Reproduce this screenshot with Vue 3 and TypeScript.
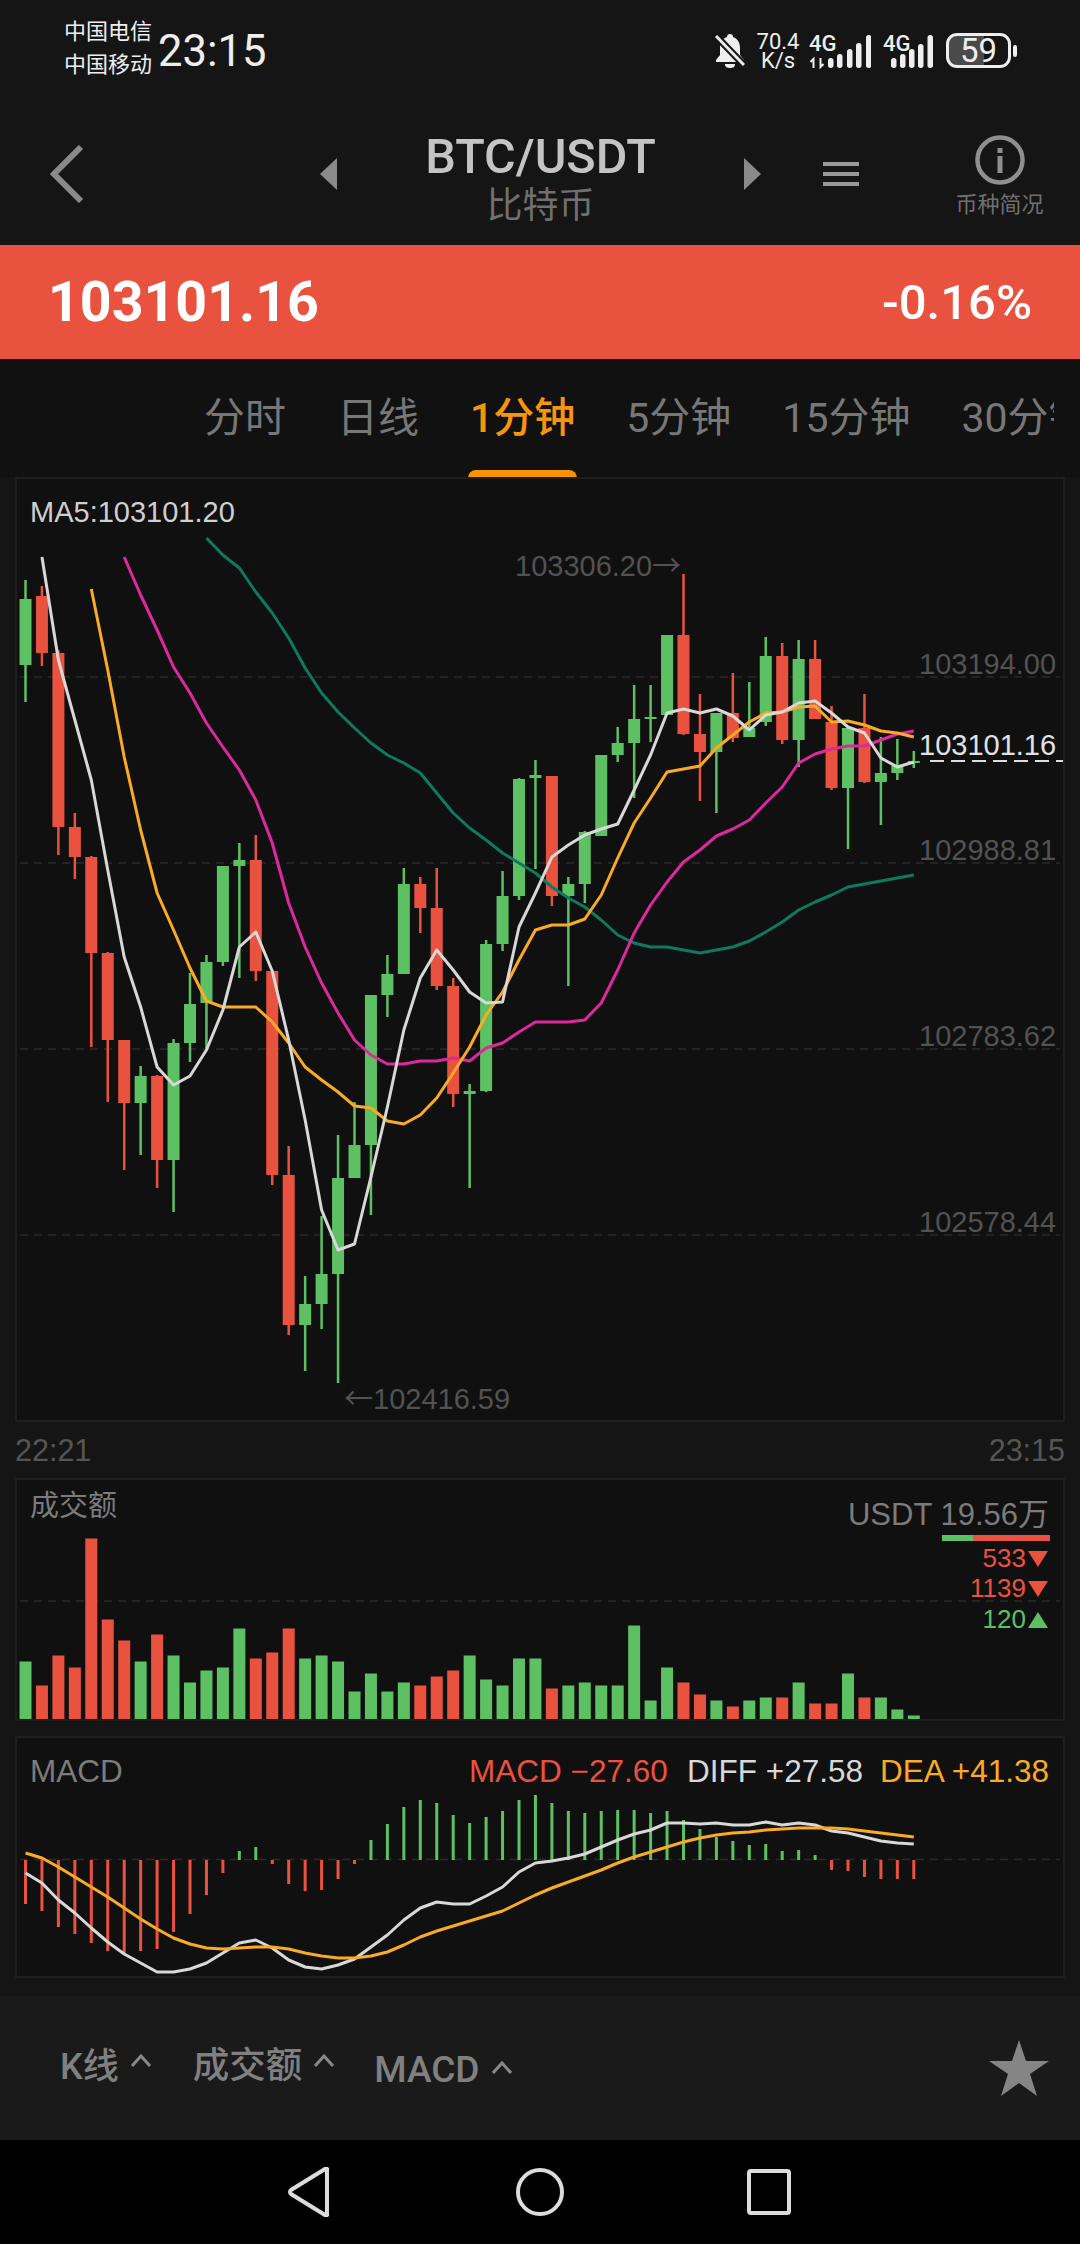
<template>
  <div class="page">
    <div class="status">
      <div class="carriers">
        <span>中国电信</span>
        <span>中国移动</span>
      </div>
      <span class="clock">23:15</span>
      <div class="status-right">
        <svg class="bell" width="30" height="35" viewBox="0 0 30 35">
          <path d="M15 1c-2 0-3 1-3 3C7 6 5 10 5 15v7l-4 5v2h28v-2l-4-5v-7c0-5-2-9-7-11 0-2-1-3-3-3z" fill="#eee" />
          <path d="M10 31h10c0 3-2 4-5 4s-5-1-5-4z" fill="#eee" />
          <path d="M1 3l28 29" stroke="#161718" stroke-width="7" />
          <path d="M1 3l28 29" stroke="#eee" stroke-width="3" />
        </svg>
        <div class="speed">
          <span>70.4</span>
          <span>K/s</span>
        </div>
        <svg class="sig" width="62" height="42" viewBox="809 26 62 42">
          <text x="809" y="50" class="net">4G</text>
          <path d="M813.5 67v-9l-3 3M820.5 57v9l3-3" stroke="#eee" stroke-width="2" fill="none" />
          <rect v-for="b in sig1" :key="b[0]" :x="b[0]" :y="b[1]" width="5.5" :height="67 - b[1]" rx="2.7" fill="#eee" />
        </svg>
        <svg class="sig sig2" width="50" height="42" viewBox="883 26 50 42">
          <text x="883" y="50" class="net">4G</text>
          <rect v-for="b in sig2" :key="b[0]" :x="b[0]" :y="b[1]" width="5.5" :height="67 - b[1]" rx="2.7" fill="#eee" />
        </svg>
        <div class="battery">59</div>
        <div class="battery-tip"></div>
      </div>
    </div>

    <div class="nav">
      <svg class="back" width="34" height="58" viewBox="0 0 34 58">
        <path d="M31 2L4 29l27 27" fill="none" stroke="#8a8a8a" stroke-width="6" />
      </svg>
      <svg class="tri-left" width="17" height="32" viewBox="0 0 17 32"><path d="M17 0v32L0 16z" fill="#8a8a8a" /></svg>
      <div class="title">
        <div class="pair">BTC/USDT</div>
        <div class="coin">比特币</div>
      </div>
      <svg width="17" height="32" viewBox="0 0 17 32"><path d="M0 0v32l17-16z" fill="#8a8a8a" /></svg>
      <div class="burger"><i></i><i></i><i></i></div>
      <div class="info">
        <svg width="50" height="50" viewBox="0 0 50 50">
          <circle cx="25" cy="25" r="22.5" fill="none" stroke="#8f8f8f" stroke-width="4.5" />
          <rect x="22.5" y="13" width="5" height="5" fill="#8f8f8f" />
          <rect x="22.5" y="21" width="5" height="17" fill="#8f8f8f" />
        </svg>
        <span>币种简况</span>
      </div>
    </div>

    <div class="price-bar">
      <span class="price">103101.16</span>
      <span class="change">-0.16%</span>
    </div>

    <div class="tabs">
      <div class="tabs-inner">
        <span v-for="t in tabs" :key="t" class="tab" :class="{ active: t === '1分钟' }">{{ t }}</span>
      </div>
    </div>

    <div class="panel main-panel">
      <svg class="chart" width="1050" height="945" viewBox="15 477 1050 945">
        <line x1="24" x2="1055" y1="478" y2="478" class="top-line" />
        <line v-for="y in gridY" :key="y" x1="20" x2="1060" :y1="y" :y2="y" class="grid" />
        <g v-for="(c, i) in candles" :key="i" :fill="c[0] ? green : red">
          <rect :x="xAt(i) - 1.25" :y="c[3]" width="2.5" :height="c[4] - c[3]" />
          <rect :x="xAt(i) - 6" :y="c[1]" width="12" :height="c[2] - c[1]" />
        </g>
        <polyline :points="line(ma30, 11)" class="ln" stroke="#0d7a5f" />
        <polyline :points="line(ma20, 6)" class="ln" stroke="#dc2a9e" />
        <polyline :points="line(ma10, 4)" class="ln" stroke="#f9ab25" />
        <polyline :points="line(ma5, 1)" class="ln" stroke="#d8d8d8" />
        <text x="30" y="522" class="lbl ma">MA5:103101.20</text>
        <text x="515" y="576" class="lbl dim">103306.20<tspan class="arrow">→</tspan></text>
        <text x="344" y="1409" class="lbl dim"><tspan class="arrow">←</tspan>102416.59</text>
        <text v-for="l in axis" :key="l[0]" x="919" :y="l[1]" class="lbl dim">{{ l[0] }}</text>
        <text x="919" y="755" class="lbl last">103101.16</text>
        <line x1="930" x2="1063" y1="761" y2="761" class="last-line" />
      </svg>
    </div>

    <div class="times">
      <span>22:21</span>
      <span>23:15</span>
    </div>

    <div class="panel vol-panel">
      <svg class="chart" width="1050" height="243" viewBox="15 1478 1050 243">
        <line x1="20" x2="1060" y1="1601" y2="1601" class="grid" />
        <rect
          v-for="(v, i) in volumes"
          :key="i"
          :x="xAt(i) - 6"
          :y="1719.5 - v[1]"
          width="12"
          :height="v[1]"
          :fill="v[0] ? green : red"
        />
        <text x="30" y="1516" class="lbl muted">成交额</text>
        <text x="1049" y="1525" class="lbl muted usdt" text-anchor="end">USDT 19.56万</text>
        <rect x="942" y="1535" width="31" height="6" :fill="green" />
        <rect x="973" y="1535" width="77" height="6" :fill="red" />
        <text x="1026" y="1567" class="lbl small" :fill="red" text-anchor="end">533</text>
        <path d="M1028 1551h20l-10 16z" :fill="red" />
        <text x="1026" y="1597" class="lbl small" :fill="red" text-anchor="end">1139</text>
        <path d="M1028 1581h20l-10 16z" :fill="red" />
        <text x="1026" y="1628" class="lbl small" :fill="green" text-anchor="end">120</text>
        <path d="M1028 1628h20l-10-16z" :fill="green" />
      </svg>
    </div>

    <div class="panel macd-panel">
      <svg class="chart" width="1050" height="242" viewBox="15 1736 1050 242">
        <line x1="20" x2="1060" y1="1859.5" y2="1859.5" class="grid" />
        <rect
          v-for="(h, i) in hist"
          :key="i"
          :x="xAt(i) - 1.5"
          :y="Math.min(h, 1860)"
          width="3"
          :height="Math.abs(h - 1860)"
          :fill="h < 1860 ? green : red"
        />
        <polyline :points="line(diff, 0)" class="ln" stroke="#d8d8d8" />
        <polyline :points="line(dea, 0)" class="ln" stroke="#f9ab25" />
        <text x="30" y="1782" class="lbl muted big">MACD</text>
        <text x="469" y="1782" class="lbl big" :fill="red">MACD −27.60</text>
        <text x="687" y="1782" class="lbl big" fill="#d8d8d8">DIFF +27.58</text>
        <text x="880" y="1782" class="lbl big" fill="#f9ab25">DEA +41.38</text>
      </svg>
    </div>

    <div class="toolbar">
      <div class="tool k"><span>K线</span><svg width="20" height="13" viewBox="0 0 20 13"><path d="M1 12l9-10 9 10" class="caret" /></svg></div>
      <div class="tool vol"><span>成交额</span><svg width="20" height="13" viewBox="0 0 20 13"><path d="M1 12l9-10 9 10" class="caret" /></svg></div>
      <div class="tool macd"><span>MACD</span><svg width="20" height="13" viewBox="0 0 20 13"><path d="M1 12l9-10 9 10" class="caret" /></svg></div>
      <svg class="star" width="60" height="56" viewBox="0 0 60 56">
        <path d="M30 0l7 21h23L41 34l7 22-18-13-18 13 7-22L0 21h23z" fill="#858585" />
      </svg>
    </div>

    <div class="sysnav">
      <svg width="42" height="50" viewBox="0 0 42 50">
        <path d="M39 3v44a1 1 0 0 1-2 1L3 27a2.5 2.5 0 0 1 0-4L37 2a1 1 0 0 1 2 1z" class="sys" />
      </svg>
      <svg width="50" height="50" viewBox="0 0 50 50"><circle cx="25" cy="25" r="22" class="sys" /></svg>
      <svg width="44" height="46" viewBox="0 0 44 46"><rect x="2" y="2" width="40" height="42" rx="2" class="sys" /></svg>
    </div>
  </div>
</template>

<script setup lang="ts">
const green = '#5dc063'
const red = '#ea5240'

const tabs = ['分时', '日线', '1分钟', '5分钟', '15分钟', '30分钟']
const gridY = [677, 863, 1049, 1235]
const axis: [string, number][] = [
  ['103194.00', 674],
  ['102988.81', 860],
  ['102783.62', 1046],
  ['102578.44', 1232]
]
const sig1 = [[828, 57], [837, 53], [847, 48], [856, 42], [866, 34]]
const sig2 = [[891, 57], [900, 53], [909, 48], [918, 43], [927.5, 34]]

const xAt = (i: number) => 25.5 + 16.45 * i
const line = (ys: number[], start: number) => ys.map((y, i) => `${xAt(i + start)},${y}`).join(' ')

// [green?, body top, body bottom, wick top, wick bottom]
const candles: number[][] = [
  [1, 599, 665, 580, 702], [0, 596, 653, 586, 666], [0, 653, 827, 650, 855], [0, 827, 857, 813, 879],
  [0, 857, 953, 856, 1047], [0, 953, 1040, 952, 1102], [0, 1040, 1103, 1040, 1170], [1, 1076, 1103, 1066, 1155],
  [0, 1076, 1160, 1075, 1188], [1, 1043, 1160, 1039, 1212], [1, 1004, 1043, 973, 1062], [1, 962, 1003, 955, 1048],
  [1, 866, 962, 866, 966], [1, 860, 866, 843, 978], [0, 860, 971, 835, 981], [0, 971, 1175, 970, 1185],
  [0, 1175, 1325, 1146, 1335], [1, 1304, 1325, 1276, 1371], [1, 1274, 1304, 1216, 1329], [1, 1178, 1274, 1135, 1383],
  [1, 1145, 1178, 1102, 1178], [1, 995, 1145, 995, 1215], [1, 974, 995, 955, 1017], [1, 884, 974, 868, 974],
  [0, 884, 908, 877, 933], [0, 908, 986, 868, 990], [0, 986, 1094, 978, 1107], [1, 1091, 1094, 1084, 1188],
  [1, 944, 1091, 940, 1092], [1, 896, 944, 871, 951], [1, 779, 896, 778, 900], [1, 775, 778, 760, 869],
  [0, 776, 896, 776, 906], [1, 884, 896, 877, 986], [1, 832, 884, 831, 903], [1, 755, 836, 755, 836],
  [1, 743, 755, 727, 762], [1, 719, 743, 685, 798], [1, 717, 719, 685, 742], [1, 635, 715, 635, 715],
  [0, 635, 734, 574, 735], [0, 734, 752, 694, 801], [1, 713, 752, 713, 813], [0, 713, 738, 673, 742],
  [1, 728, 737, 682, 737], [1, 656, 722, 637, 726], [0, 656, 740, 643, 744], [1, 659, 740, 640, 767],
  [0, 659, 719, 640, 719], [0, 722, 788, 706, 790], [1, 728, 788, 728, 849], [0, 728, 782, 694, 783],
  [1, 773, 782, 737, 825], [1, 766, 773, 739, 780], [1, 761, 763, 751, 768]
]

const ma5 = [557, 660, 720, 780, 870, 957, 1007, 1067, 1085, 1076, 1050, 1010, 947, 932, 971, 1040, 1120, 1210, 1250, 1244, 1177, 1107, 1030, 978, 950, 970, 992, 1003, 1002, 927, 893, 857, 845, 835, 829, 824, 790, 755, 713, 709, 713, 709, 716, 730, 715, 712, 703, 701, 713, 727, 733, 758, 767, 762]
const ma10 = [589, 670, 757, 830, 893, 930, 968, 1001, 1007, 1007, 1007, 1022, 1043, 1067, 1080, 1092, 1106, 1108, 1121, 1124, 1115, 1098, 1073, 1047, 1015, 992, 960, 930, 925, 925, 919, 895, 858, 823, 798, 772, 769, 766, 748, 735, 722, 713, 712, 707, 706, 722, 721, 725, 731, 733, 737]
const ma20 = [557, 595, 630, 667, 693, 723, 747, 770, 800, 843, 903, 947, 983, 1013, 1040, 1055, 1064, 1064, 1061, 1061, 1058, 1061, 1048, 1043, 1032, 1022, 1022, 1022, 1020, 1003, 970, 933, 905, 882, 862, 850, 836, 829, 820, 803, 787, 763, 754, 749, 746, 746, 740, 734, 731]
const ma30 = [538, 555, 568, 592, 613, 638, 668, 693, 712, 728, 743, 755, 763, 773, 793, 813, 828, 840, 853, 863, 873, 887, 898, 907, 920, 935, 943, 947, 947, 950, 953, 950, 947, 941, 932, 922, 910, 902, 895, 887, 884, 881, 878, 875]

const volumes: number[][] = [
  [1, 58], [0, 34], [0, 64], [0, 52], [0, 181], [0, 100], [0, 79], [1, 58], [0, 85], [1, 64], [1, 37],
  [1, 49], [1, 52], [1, 91], [0, 61], [0, 67], [0, 91], [1, 61], [1, 64], [1, 58], [1, 28], [1, 46],
  [1, 28], [1, 37], [0, 34], [0, 43], [0, 49], [1, 64], [1, 40], [1, 34], [1, 61], [1, 61], [0, 31],
  [1, 34], [1, 37], [1, 34], [1, 34], [1, 94], [1, 19], [1, 52], [0, 37], [0, 25], [1, 19], [0, 13],
  [1, 19], [1, 22], [0, 22], [1, 37], [0, 16], [0, 16], [1, 46], [0, 22], [1, 22], [1, 10], [1, 4]
]

// histogram tips, the zero line sits at 1860
const hist = [1904, 1911, 1927, 1934, 1943, 1951, 1953, 1951, 1949, 1932, 1914, 1895, 1873, 1851, 1847, 1864, 1884, 1891, 1890, 1879, 1864, 1840, 1824, 1807, 1800, 1803, 1815, 1823, 1817, 1811, 1800, 1795, 1803, 1811, 1813, 1811, 1810, 1810, 1813, 1811, 1820, 1829, 1837, 1841, 1845, 1844, 1851, 1850, 1855, 1870, 1871, 1877, 1879, 1879, 1879]
const diff = [1873, 1883, 1900, 1913, 1928, 1942, 1954, 1963, 1972, 1972, 1969, 1963, 1953, 1943, 1940, 1948, 1960, 1967, 1969, 1965, 1959, 1947, 1935, 1920, 1908, 1902, 1904, 1904, 1896, 1887, 1872, 1863, 1861, 1858, 1854, 1847, 1840, 1834, 1830, 1823, 1823, 1824, 1823, 1825, 1825, 1822, 1825, 1823, 1825, 1831, 1833, 1837, 1841, 1843, 1844]
const dea = [1853, 1858, 1867, 1877, 1887, 1897, 1908, 1919, 1929, 1938, 1944, 1948, 1949, 1948, 1947, 1947, 1949, 1953, 1956, 1958, 1958, 1956, 1952, 1945, 1937, 1931, 1926, 1921, 1916, 1911, 1903, 1895, 1888, 1882, 1876, 1870, 1863, 1857, 1852, 1847, 1842, 1838, 1835, 1833, 1832, 1830, 1829, 1828, 1828, 1828, 1829, 1831, 1833, 1835, 1837]
</script>

<style scoped>
.page {
  width: 1080px;
  height: 2244px;
  overflow: hidden;
  background: #151516;
  font-family: Roboto, "Noto Sans CJK SC", sans-serif;
  display: flex;
  flex-direction: column;
}
.status {
  height: 110px;
  flex: none;
  display: flex;
  align-items: flex-start;
  padding-left: 64px;
  color: #eee;
}
.carriers {
  display: flex;
  flex-direction: column;
  gap: 7px;
  margin-top: 19px;
  font-size: 22px;
  line-height: 26px;
  width: 94px;
}
.clock {
  font-size: 43.5px;
  line-height: 52px;
  margin-top: 26px;
}
.status-right {
  margin-left: auto;
  margin-right: 63px;
  display: flex;
  align-items: center;
  margin-top: 33px;
  height: 35px;
}
.bell {
  margin-right: 12px;
}
.speed {
  display: flex;
  flex-direction: column;
  align-items: center;
  width: 42px;
  font-size: 22px;
  line-height: 19px;
  margin-right: 10px;
}
.sig {
  margin-bottom: 6px;
}
.net {
  font-family: Roboto, sans-serif;
  font-size: 22px;
  font-weight: 500;
  fill: #eee;
}
.sig2 {
  margin-left: 12px;
}
.battery {
  margin-left: 13px;
  width: 65px;
  height: 35px;
  box-sizing: border-box;
  border: 3px solid #eee;
  border-radius: 11px;
  background: linear-gradient(90deg, #4a4a4a 59%, transparent 59%);
  font-size: 33px;
  line-height: 29px;
  text-align: center;
}
.battery-tip {
  width: 4px;
  height: 12px;
  margin-left: 2px;
  background: #eee;
  border-radius: 2px;
}
.nav {
  height: 135px;
  flex: none;
  box-sizing: border-box;
  padding: 0 0 8px 50px;
  display: flex;
  align-items: center;
}
.tri-left {
  margin-left: 236px;
}
.title {
  width: 407px;
  text-align: center;
  margin-top: 11px;
}
.pair {
  font-size: 48.5px;
  line-height: 50px;
  font-weight: 500;
  color: #c4c4c4;
}
.coin {
  margin-top: 3px;
  font-size: 36px;
  line-height: 42px;
  color: #707070;
}
.burger {
  margin-left: 62px;
  width: 36px;
  display: flex;
  flex-direction: column;
  gap: 6px;
}
.burger i {
  display: block;
  height: 4px;
  background: #999;
}
.info {
  margin-left: 98px;
  width: 85px;
  display: flex;
  flex-direction: column;
  align-items: center;
  margin-top: 6px;
  font-size: 22px;
  line-height: 28px;
  color: #707070;
  white-space: nowrap;
}
.info svg {
  margin-bottom: 6px;
}
.price-bar {
  height: 114px;
  flex: none;
  background: #ea5240;
  color: #fff;
  display: flex;
  align-items: center;
  justify-content: space-between;
  padding: 0 48px;
}
.price {
  font-size: 55.5px;
  font-weight: 700;
}
.change {
  font-size: 49px;
  font-weight: 500;
}
.tabs {
  height: 118px;
  flex: none;
  background: #111;
}
.tabs-inner {
  box-sizing: border-box;
  width: 1054px;
  height: 100%;
  padding: 35px 0 0 204px;
  display: flex;
  gap: 51px;
  overflow: hidden;
  white-space: nowrap;
  font-size: 41px;
  line-height: 48px;
  color: #777;
}
.tab {
  position: relative;
  flex: none;
}
.tab.active {
  color: #f7960e;
  font-weight: 500;
}
.tab.active::after {
  content: "";
  position: absolute;
  left: -2px;
  right: -2px;
  top: 76px;
  height: 9px;
  background: #f79400;
  border-radius: 8px 8px 0 0;
}
.panel {
  flex: none;
  margin-left: 15px;
  width: 1050px;
  background: #101010;
  outline: 2px solid #1f1f20;
  outline-offset: -2px;
}
.chart {
  display: block;
}
.main-panel {
  height: 945px;
}
.top-line {
  stroke: #3a3a3a;
  stroke-width: 2;
}
.grid {
  stroke: #2a2a2a;
  stroke-width: 1.5;
  stroke-dasharray: 8 6;
}
.ln {
  fill: none;
  stroke-width: 3;
  stroke-linejoin: round;
}
.lbl {
  font-family: "Liberation Sans", "Noto Sans CJK SC", sans-serif;
  font-size: 29px;
}
.arrow {
  font-family: "Noto Sans CJK SC", sans-serif;
}
.ma {
  fill: #cfcfcf;
}
.dim {
  fill: #525252;
}
.last {
  fill: #e2e2e2;
}
.last-line {
  stroke: #dedede;
  stroke-width: 2;
  stroke-dasharray: 14 7;
}
.muted {
  fill: #7b7b7b;
}
.usdt {
  font-size: 31px;
}
.big {
  font-size: 31.5px;
}
.small {
  font-size: 26px;
}
.times {
  height: 56px;
  flex: none;
  box-sizing: border-box;
  padding: 12px 15px 0;
  display: flex;
  justify-content: space-between;
  font-family: "Liberation Sans", sans-serif;
  font-size: 30.5px;
  line-height: 32px;
  color: #555;
}
.vol-panel {
  height: 243px;
}
.macd-panel {
  margin-top: 15px;
  height: 242px;
}
.toolbar {
  margin-top: 18px;
  height: 144px;
  flex: none;
  background: #1a1a1a;
  display: flex;
  align-items: center;
  color: #808080;
  font-weight: 500;
  font-size: 36.5px;
}
.tool {
  display: flex;
  align-items: center;
  gap: 12px;
}
.tool svg {
  margin-top: -4px;
}
.k {
  margin-left: 60px;
  margin-top: -11px;
  font-size: 36px;
}
.vol {
  margin-left: 42px;
  margin-top: -11px;
}
.macd {
  margin-left: 40px;
  font-size: 37px;
  margin-top: 2px;
}
.caret {
  fill: none;
  stroke: #888;
  stroke-width: 3;
}
.star {
  margin-left: auto;
  margin-right: 31px;
}
.sysnav {
  height: 104px;
  flex: none;
  background: #000;
  display: flex;
  align-items: center;
  box-sizing: border-box;
  padding: 0 0 0 288px;
}
.sysnav svg:nth-child(2) {
  margin-left: 185px;
}
.sysnav svg:nth-child(3) {
  margin-left: 182px;
}
.sys {
  fill: none;
  stroke: #dcdcdc;
  stroke-width: 4;
}
</style>

<style>
html,
body {
  margin: 0;
  background: #151516;
}
</style>
